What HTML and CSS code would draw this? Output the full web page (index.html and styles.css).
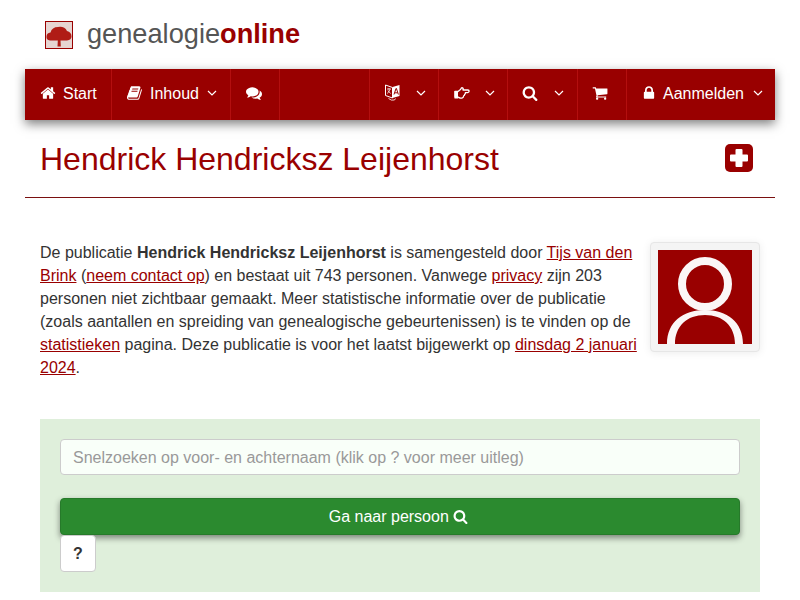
FILE: index.html
```html
<!DOCTYPE html>
<html lang="nl">
<head>
  <meta charset="UTF-8" />
  <title>Hendrick Hendricksz Leijenhorst - Genealogie Online</title>
  <link rel="stylesheet" href="styles.css">
</head>
<body>
  <div class="container">
    <header class="brand">
      <svg class="brand-logo" viewBox="0 0 28 28">
        <defs><filter id="soft"><feGaussianBlur stdDeviation="0.5"/></filter></defs>
        <rect x="0.500" y="0.500" width="27" height="27" fill="#e6d5d2" stroke="#990000"/>
        <path d="M12.500 25.500 L12.800 19.500 L5 19.500 Q1 19 1.500 15.500 Q1.500 12 5.500 11.500 Q7 6 13 6 Q19.500 5 22 10 Q26.500 11 26.500 15.500 Q26.500 19 22 19.500 L15.500 19.500 L15.800 25.500 Z" fill="#b01c16" filter="url(#soft)"/>
      </svg>
      <span class="brand-name">genealogie<b>online</b></span>
    </header>

    <nav class="navbar">
      <ul class="nav-left">
        <li class="w-start">
          <svg class="icon" viewBox="0 0 1792 1792"><path d="M1472 992v480q0 26-19 45t-45 19h-384v-384h-256v384h-384q-26 0-45-19t-19-45v-480q0-1 .5-3t.5-3l575-474 575 474q1 2 1 6zm223-69l-62 74q-8 9-21 11h-3q-13 0-21-7l-692-577-692 577q-12 8-24 7-13-2-21-11l-62-74q-8-10-7-23.500t11-21.500l719-599q32-26 76-26t76 26l244 204v-195q0-14 9-23t23-9h192q14 0 23 9t9 23v408l219 182q10 8 11 21.500t-7 23.500z"/></svg>
          Start
        </li>
        <li class="w-inhoud">
          <svg class="icon" viewBox="0 0 1792 1792"><path d="M1639 478q40 57 18 129l-275 906q-19 64-76.500 107.500t-122.500 43.500h-923q-77 0-148.500-53.500t-99.500-131.500q-24-67-2-127 0-4 3-27t4-37q1-8-3-21.500t-3-19.500q2-11 8-21t16.500-23.500 16.500-23.500q23-38 45-91.500t30-91.500q3-10 .5-30t-.5-28q3-11 17-28t17-23q21-36 42-92t25-90q1-9-2.500-32t.5-28q4-13 22-30.500t22-22.500q19-26 42.500-84.500t27.500-96.500q1-8-3-25.500t-2-26.500q2-8 9-18t18-23 17-21q8-12 16.500-30.500t15-35 16-36 19.500-32 26.500-23.500 36-11.500 47.500 5.500l-1 3q38-9 51-9h761q74 0 114 56t18 130l-274 906q-36 119-71.500 153.500t-128.500 34.500h-869q-27 0-38 15-11 16-1 43 24 70 144 70h923q29 0 56-15.500t35-41.500l300-987q7-22 5-57 38 15 59 43zm-1064 2q-4 13 2 22.500t20 9.500h608q13 0 25.500-9.500t16.500-22.500l21-64q4-13-2-22.500t-20-9.500h-608q-13 0-25.500 9.500t-16.500 22.500zm-83 256q-4 13 2 22.500t20 9.500h608q13 0 25.500-9.500t16.500-22.500l21-64q4-13-2-22.500t-20-9.500h-608q-13 0-25.500 9.500t-16.500 22.500z"/></svg>
          Inhoud
          <svg class="chevron" viewBox="0 0 10 6"><path d="M1 1l4 4 4-4"/></svg>
        </li>
        <li class="w-chat">
          <svg class="icon" viewBox="0 0 1792 1792"><path d="M1408 768q0 139-94 257t-256.500 186.500-353.500 68.500q-86 0-176-16-124 88-278 128-36 9-86 16h-3q-11 0-20.500-8t-11.500-21q-1-3-1-6.500t.5-6.500 2-6l2.500-5 3.500-5.500 4-5 4.500-5 4-4.500q5-6 23-25t26-29.500 22.500-29 25-38.500 20.500-44q-124-72-195-177t-71-224q0-139 94-257t256.500-186.500 353.500-68.500 353.500 68.500 256.500 186.500 94 257zm384 256q0 120-71 224.500t-195 176.500q10 24 20.500 44t25 38.500 22.500 29 26 29.500 23 25q1 1 4 4.500t4.500 5 4 5 3.500 5.500l2.500 5 2 6 .5 6.500-1 6.500q-3 14-13 22t-22 7q-50-7-86-16-154-40-278-128-90 16-176 16-271 0-472-132 58 4 88 4 161 0 309-45t264-129q125-92 192-212t67-254q0-77-23-152 129 71 204 178t75 230z"/></svg>
        </li>
      </ul>
      <ul class="nav-right">
        <li class="w-lang">
          <svg class="icon icon-lang" viewBox="0 0 15 18"><path d="M.5 1l7 2.500v10.500l-7-2.500z" fill="none" stroke="#fff"/><path d="M7.500 3l7-2v11l-7 2z"/><path d="M2 5h4M4 4v1.500M2.500 9.500l2.500-4M3 6.500l2.500 3" fill="none" stroke="#fff" stroke-width=".8"/><path d="M9 10.500l2-6h.4l2 6M9.800 8.800h2.800" fill="none" stroke="#990000"/><path d="M3.500 14.500q3 2.500 6 1.500l1-1.500" fill="none" stroke="#fff" stroke-width=".8"/></svg>
          <svg class="chevron" viewBox="0 0 10 6"><path d="M1 1l4 4 4-4"/></svg>
        </li>
        <li class="w-hand">
          <svg class="icon icon-hand" viewBox="0 0 16 12"><path d="M1 4.500h3l2.500-2L7.500.800q1.500-.3 1.800 1l-.4 1.200h5q1.300.2 1.200 1.300-.1 1.200-1.400 1.300h-2.300q.2 1.300-.8 1.700.1 1.300-1 1.600 0 1.800-1.700 2.200H6.500q-1.400 0-2.500-1H1z" fill="none" stroke="#fff" stroke-width="1.300" stroke-linejoin="round"/><rect x="0.500" y="4" width="3.500" height="7.500"/></svg>
          <svg class="chevron" viewBox="0 0 10 6"><path d="M1 1l4 4 4-4"/></svg>
        </li>
        <li class="w-search">
          <svg class="icon" viewBox="0 0 1792 1792"><path d="M1216 832q0-185-131.500-316.500t-316.500-131.500-316.500 131.500-131.500 316.500 131.500 316.500 316.500 131.500 316.500-131.500 131.500-316.500zm512 832q0 52-38 90t-90 38q-54 0-90-38l-343-342q-179 124-399 124-143 0-273.500-55.500t-225-150-150-225-55.500-273.500 55.500-273.500 150-225 225-150 273.500-55.500 273.500 55.500 225 150 150 225 55.500 273.500q0 220-124 399l343 343q37 37 37 90z"/></svg>
          <svg class="chevron" viewBox="0 0 10 6"><path d="M1 1l4 4 4-4"/></svg>
        </li>
        <li class="w-cart">
          <svg class="icon" viewBox="0 0 1792 1792"><path d="M704 1536q0 52-38 90t-90 38-90-38-38-90 38-90 90-38 90 38 38 90zm896 0q0 52-38 90t-90 38-90-38-38-90 38-90 90-38 90 38 38 90zm128-1088v512q0 24-16.500 42.500t-40.500 21.500l-1044 122q13 60 13 70 0 16-24 64h920q26 0 45 19t19 45-19 45-45 19h-1024q-26 0-45-19t-19-45q0-11 8-31.500t16-36 21.500-40 15.500-29.500l-177-823h-204q-26 0-45-19t-19-45 19-45 45-19h256q16 0 28.500 6.500t19.500 15.500 13 24.500 8 26 5.500 29.500 4.500 26h1201q26 0 45 19t19 45z"/></svg>
        </li>
        <li class="w-login">
          <svg class="icon" viewBox="0 0 1792 1792"><path d="M640 768h512v-192q0-106-75-181t-181-75-181 75-75 181v192zm832 96v576q0 40-28 68t-68 28h-960q-40 0-68-28t-28-68v-576q0-40 28-68t68-28h32v-192q0-184 132-316t316-132 316 132 132 316v192h32q40 0 68 28t28 68z"/></svg>
          Aanmelden
          <svg class="chevron" viewBox="0 0 10 6"><path d="M1 1l4 4 4-4"/></svg>
        </li>
      </ul>
    </nav>

    <div class="title-row">
      <h1>Hendrick Hendricksz Leijenhorst</h1>
      <svg class="title-plus" viewBox="0 0 28 28"><rect width="28" height="28" rx="5" fill="#990000"/><path d="M10.500 6a1 1 0 0 1 1-1h5a1 1 0 0 1 1 1v4.500H22a1 1 0 0 1 1 1v5a1 1 0 0 1-1 1h-4.500V22a1 1 0 0 1-1 1h-5a1 1 0 0 1-1-1v-4.500H6a1 1 0 0 1-1-1v-5a1 1 0 0 1 1-1h4.500z" fill="#fff"/></svg>
    </div>

    <main class="content">
      <div class="thumb">
        <svg viewBox="0 0 94 94"><rect width="94" height="94" fill="#990000"/><circle cx="47" cy="34" r="23" fill="none" stroke="#fbf6f6" stroke-width="8"/><path d="M9 94C9 72 25 60 47 60S85 72 85 94H77C77 76 65 65 47 65S17 76 17 94Z" fill="#fbf6f6"/></svg>
      </div>
      <p class="intro">De publicatie <b>Hendrick Hendricksz Leijenhorst</b> is samengesteld door <a href="#">Tijs van den Brink</a> (<a href="#">neem contact op</a>) en bestaat uit 743 personen. Vanwege <a href="#">privacy</a> zijn 203 personen niet zichtbaar gemaakt. Meer statistische informatie over de publicatie (zoals aantallen en spreiding van genealogische gebeurtenissen) is te vinden op de <a href="#">statistieken</a> pagina. Deze publicatie is voor het laatst bijgewerkt op <a href="#">dinsdag 2 januari 2024</a>.</p>

      <form class="search-box">
        <input class="search-input" type="text" placeholder="Snelzoeken op voor- en achternaam (klik op ? voor meer uitleg)">
        <button class="go-btn" type="button">Ga naar persoon
          <svg class="icon" viewBox="0 0 1792 1792"><path d="M1216 832q0-185-131.500-316.500t-316.500-131.500-316.500 131.500-131.500 316.500 131.500 316.500 316.500 131.500 316.500-131.500 131.500-316.500zm512 832q0 52-38 90t-90 38q-54 0-90-38l-343-342q-179 124-399 124-143 0-273.500-55.500t-225-150-150-225-55.500-273.500 55.500-273.500 150-225 225-150 273.500-55.500 273.500 55.500 225 150 150 225 55.500 273.500q0 220-124 399l343 343q37 37 37 90z"/></svg>
        </button>
        <button class="help-btn" type="button">?</button>
      </form>
    </main>
  </div>
</body>
</html>
```
FILE: styles.css
```css
* {
  box-sizing: border-box;
}
body {
  margin: 0;
  height: 600px;
  overflow: hidden;
  background: #fff;
  color: #333;
  font-family: "Liberation Sans", Arial, sans-serif;
  font-size: 16px;
  line-height: 23px;
}
.container {
  width: 750px;
  margin: 0 auto;
}

/* logo */
.brand {
  display: flex;
  align-items: center;
  height: 69px;
  padding-left: 20px;
}
.brand-logo {
  width: 28px;
  height: 28px;
  margin-right: 14px;
}
.brand-name {
  font-size: 27.200px;
  color: #555;
  margin-bottom: 2px;
}
.brand-name b {
  color: #990000;
}

/* menu */
.navbar {
  display: flex;
  justify-content: space-between;
  height: 51px;
  background: #990000;
  color: #fff;
  box-shadow: 0 4px 10px rgba(0, 0, 0, 0.5);
}
.navbar ul {
  display: flex;
  list-style: none;
  margin: 0;
  padding: 0;
}
.navbar li {
  display: flex;
  align-items: center;
  border-right: 1px solid #b30f0f;
  padding-left: 15px;
  padding-bottom: 3px;
}
.nav-right {
  border-left: 1px solid #b30f0f;
}
.navbar .w-login {
  border-right: 0;
  padding-left: 14px;
}
.navbar .w-search,
.navbar .w-cart {
  padding-left: 14px;
}
.w-start { width: 87px; }
.w-inhoud { width: 119px; }
.w-chat { width: 49px; }
.w-lang { width: 69px; }
.w-hand { width: 69px; }
.w-search { width: 70px; }
.w-cart { width: 49px; }
.w-login { width: 148px; }
.icon {
  width: 16px;
  height: 16px;
  fill: #fff;
  flex: none;
}
.navbar .icon {
  margin-right: 7px;
}
.navbar .icon-lang {
  width: 15px;
  height: 18px;
  margin-right: 8px;
}
.navbar .icon-hand {
  width: 16px;
  height: 12px;
}
.navbar .w-login .icon {
  margin-right: 6px;
}
.chevron {
  width: 10px;
  height: 6px;
  margin-left: 8px;
  fill: none;
  stroke: #fff;
  stroke-width: 1.200;
  flex: none;
}
.w-search .chevron,
.w-login .chevron {
  margin-left: 9px;
}

/* title */
.title-row {
  display: flex;
  justify-content: space-between;
  align-items: center;
  height: 78px;
  padding: 0 22px 0 15px;
  border-bottom: 1px solid #7a1010;
}
h1 {
  margin: 0;
  font-size: 32px;
  font-weight: 400;
  line-height: 36px;
  color: #990000;
}
.title-plus {
  width: 28px;
  height: 28px;
  margin-bottom: 2px;
}

/* publication text */
.content {
  padding: 43px 15px 0;
}
.thumb {
  float: right;
  width: 110px;
  height: 110px;
  margin: 1px 0 20px 13px;
  padding: 7px;
  background: #f4f4f4;
  border: 1px solid #e6e6e6;
  border-radius: 4px;
  box-shadow: 0 1px 8px rgba(0, 0, 0, 0.08);
}
.thumb svg {
  display: block;
  width: 94px;
  height: 94px;
}
.intro {
  margin: 0;
}
.intro a {
  color: #990000;
  text-decoration: underline;
}

/* search */
.search-box {
  clear: both;
  margin-top: 40px;
  padding: 20px;
  height: 173px;
  background: #dfefdb;
}
.search-input {
  display: block;
  width: 100%;
  height: 36px;
  padding: 1px 12px 0;
  background: #f9fff9;
  border: 1px solid #ccc;
  border-radius: 4px;
  font-family: inherit;
  font-size: 16px;
  color: #333;
}
.search-input::placeholder {
  color: #999;
  opacity: 1;
}
.go-btn {
  display: block;
  width: 100%;
  height: 37px;
  margin-top: 23px;
  padding: 0 15px 0 12px;
  background: #2b8a2f;
  border: 1px solid #267a2a;
  border-radius: 4px;
  color: #fff;
  font-family: inherit;
  font-size: 16px;
  box-shadow: 0 3px 6px rgba(0, 0, 0, 0.45);
}
.go-btn .icon {
  width: 15px;
  height: 15px;
  vertical-align: -2px;
}
.help-btn {
  display: block;
  width: 36px;
  height: 37px;
  padding: 0;
  background: #fff;
  border: 1px solid #ccc;
  border-radius: 4px;
  font-family: inherit;
  font-size: 16px;
  font-weight: 700;
  color: #333;
}
```
